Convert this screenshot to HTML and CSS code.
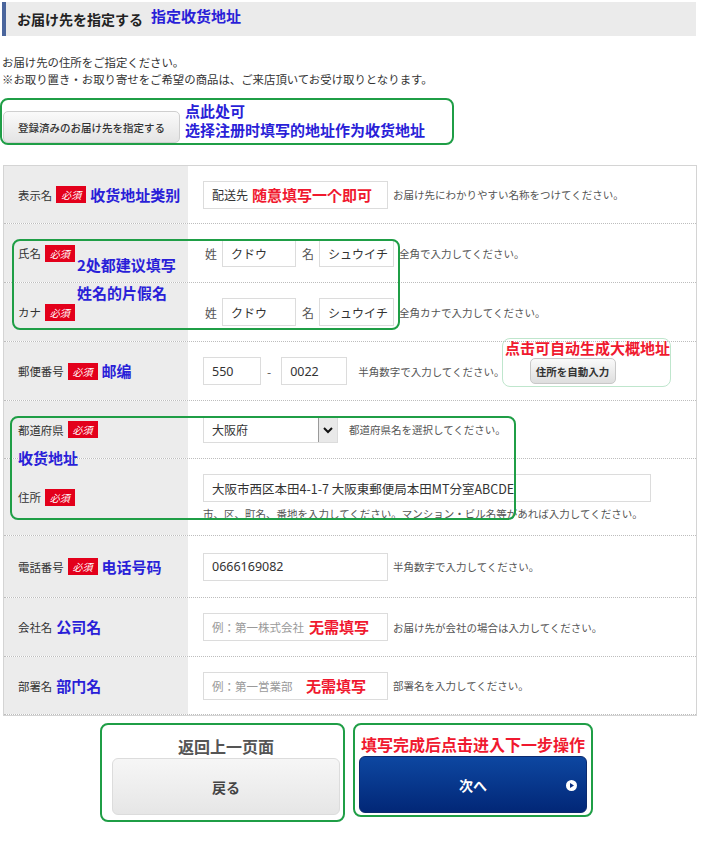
FILE: index.html
```html
<!DOCTYPE html>
<html lang="ja">
<head>
<meta charset="utf-8">
<title>お届け先を指定する</title>
<link rel="stylesheet" href="styles.css">
</head>
<body>
<div class="page">
  <div class="head">
    <h1 class="head-title">お届け先を指定する</h1>
    <span class="anno blue head-anno">指定收货地址</span>
  </div>

  <p class="intro">お届け先の住所をご指定ください。<br>※お取り置き・お取り寄せをご希望の商品は、ご来店頂いてお受け取りとなります。</p>

  <div class="reg">
    <button class="btn-reg">登録済みのお届け先を指定する</button>
    <div class="gbox reg-box"></div>
    <div class="anno blue reg-anno"><div>点此处可</div><div>选择注册时填写的地址作为收货地址</div></div>
  </div>

  <div class="form">
    <div class="row r1">
      <div class="lbl"><span class="lt">表示名</span><span class="req">必須</span><span class="anno blue">收货地址类别</span></div>
      <div class="val">
        <span class="fld"><span class="inp w185">配送先</span><span class="anno red in-anno a1">随意填写一个即可</span></span>
        <span class="note">お届け先にわかりやすい名称をつけてください。</span>
      </div>
    </div>
    <div class="row r2">
      <div class="lbl"><span class="lt">氏名</span><span class="req">必須</span></div>
      <div class="val">
        <span class="sub">姓</span><span class="inp w74">クドウ</span>
        <span class="sub">名</span><span class="inp w75">シュウイチ</span>
        <span class="note">全角で入力してください。</span>
      </div>
    </div>
    <div class="row r3">
      <div class="lbl"><span class="lt">カナ</span><span class="req">必須</span></div>
      <div class="val">
        <span class="sub">姓</span><span class="inp w74">クドウ</span>
        <span class="sub">名</span><span class="inp w75">シュウイチ</span>
        <span class="note">全角カナで入力してください。</span>
      </div>
    </div>
    <div class="row r4">
      <div class="lbl"><span class="lt">郵便番号</span><span class="req">必須</span><span class="anno blue">邮编</span></div>
      <div class="val">
        <span class="inp w58 num">550</span>
        <span class="dash">-</span>
        <span class="inp w66 num">0022</span>
        <span class="note zipnote">半角数字で入力してください。</span>
        <button class="btn-auto">住所を自動入力</button>
      </div>
    </div>
    <div class="row r5">
      <div class="lbl"><span class="lt">都道府県</span><span class="req">必須</span></div>
      <div class="val">
        <span class="sel"><span class="sel-txt">大阪府</span><span class="sel-arr"><svg width="12" height="10" viewBox="0 0 12 10"><path d="M2 3 L6 7 L10 3" fill="none" stroke="#111" stroke-width="2"/></svg></span></span>
        <span class="note">都道府県名を選択してください。</span>
      </div>
    </div>
    <div class="row r6">
      <div class="lbl"><span class="lt">住所</span><span class="req">必須</span></div>
      <div class="val col">
        <span class="inp w448">大阪市西区本田4-1-7 大阪東郵便局本田MT分室ABCDE</span>
        <span class="note addrnote">市、区、町名、番地を入力してください。マンション・ビル名等があれば入力してください。</span>
      </div>
    </div>
    <div class="row r7">
      <div class="lbl"><span class="lt">電話番号</span><span class="req">必須</span><span class="anno blue">电话号码</span></div>
      <div class="val">
        <span class="inp w185 num">0666169082</span>
        <span class="note">半角数字で入力してください。</span>
      </div>
    </div>
    <div class="row r8">
      <div class="lbl"><span class="lt">会社名</span><span class="anno blue">公司名</span></div>
      <div class="val">
        <span class="fld"><span class="inp w185 ph">例：第一株式会社</span><span class="anno red in-anno a8">无需填写</span></span>
        <span class="note">お届け先が会社の場合は入力してください。</span>
      </div>
    </div>
    <div class="row r9">
      <div class="lbl"><span class="lt">部署名</span><span class="anno blue">部门名</span></div>
      <div class="val">
        <span class="fld"><span class="inp w185 ph">例：第一営業部</span><span class="anno red in-anno a9">无需填写</span></span>
        <span class="note">部署名を入力してください。</span>
      </div>
    </div>

    <div class="gbox name-box"></div>
    <div class="gbox addr-box"></div>
    <div class="zip-box"></div>
    <div class="anno blue name-anno1">2处都建议填写</div>
    <div class="anno blue name-anno2">姓名的片假名</div>
    <div class="anno blue addr-anno">收货地址</div>
    <div class="anno red zip-anno">点击可自动生成大概地址</div>
  </div>

  <div class="actions">
    <div class="gbox2 back-box">
      <div class="back-anno">返回上一页面</div>
      <button class="btn-back">戻る</button>
    </div>
    <div class="gbox2 next-box">
      <div class="anno red next-anno">填写完成后点击进入下一步操作</div>
      <button class="btn-next">次へ<span class="next-ico"><svg width="11" height="11" viewBox="0 0 11 11"><circle cx="5.5" cy="5.5" r="5.5" fill="#fff"/><path d="M4 3 L8 5.5 L4 8 Z" fill="#0b2f80"/></svg></span></button>
    </div>
  </div>
</div>
</body>
</html>
```

FILE: styles.css
```css
* { box-sizing: border-box; }
body {
  margin: 0;
  background: #fff;
  font-family: "Noto Sans CJK JP", "Noto Sans", sans-serif;
  color: #333;
}
.page { width: 701px; position: relative; }

.anno {
  font-family: "Noto Sans CJK SC", "Noto Sans", sans-serif;
  font-weight: bold;
  font-size: 15px;
  line-height: 18px;
  white-space: nowrap;
}
.blue { color: #2a1fd8; }
.red { color: #f0192f; }

.head {
  margin: 2px 0 0 2px;
  width: 694px;
  height: 34px;
  background: #ebebeb;
  border-left: 4px solid #4a659c;
  display: flex;
  align-items: center;
  padding-left: 11px;
  gap: 8px;
}
.head-title {
  margin: 0;
  font-size: 14px;
  font-weight: bold;
  color: #222;
  line-height: 18px;
}
.head-anno { margin-top: -6px; }

.intro {
  margin: 18px 0 0 2px;
  font-size: 11.4px;
  line-height: 17px;
  color: #333;
}

.reg {
  position: relative;
  margin-top: 23px;
  height: 32px;
  padding-left: 3px;
}
.btn-reg {
  width: 177px;
  height: 32px;
  border: 1px solid #cfcfcf;
  border-radius: 5px;
  background: linear-gradient(#fafafa, #e4e4e4);
  font-family: "Noto Sans CJK JP", sans-serif;
  font-size: 10.5px;
  font-weight: 500;
  color: #333;
  padding: 0;
}
.gbox {
  position: absolute;
  border: 2px solid #1f9e46;
  border-radius: 8px;
  pointer-events: none;
}
.reg-box { left: 0; top: -13px; width: 454px; height: 47px; }
.reg-anno {
  position: absolute;
  left: 185px;
  top: -9px;
  display: flex;
  flex-direction: column;
  gap: 1px;
}

.form {
  position: relative;
  margin: 22px 0 0 3px;
  width: 694px;
  border: 1px solid #d4d4d4;
}
.row {
  display: flex;
  border-bottom: 1px dotted #bdbdbd;
}
.row:last-of-type { border-bottom: none; }
.r1 { height: 58px; }
.r2 { height: 59px; }
.r3 { height: 59px; }
.r4 { height: 59px; }
.r5 { height: 58px; }
.r6 { height: 77px; }
.r7 { height: 62px; }
.r8 { height: 59px; }
.r9 { height: 58px; }

.lbl {
  width: 184px;
  flex: none;
  background: #ececec;
  display: flex;
  align-items: center;
  padding-left: 14px;
  gap: 4px;
}
.lt { font-size: 11.4px; color: #333; }
.req {
  display: inline-block;
  width: 30px;
  height: 17px;
  background: #e3001b;
  color: #fff;
  font-size: 10px;
  font-style: italic;
  line-height: 17px;
  text-align: center;
}
.val {
  flex: 1;
  display: flex;
  align-items: center;
  padding-left: 15px;
  gap: 5px;
}
.val.col {
  flex-direction: column;
  align-items: flex-start;
  justify-content: flex-start;
  padding-top: 15px;
  gap: 4px;
}
.inp {
  display: inline-flex;
  align-items: center;
  height: 28px;
  border: 1px solid #dcdcdc;
  background: #fff;
  padding: 0 8px;
  font-size: 12px;
  color: #333;
  white-space: nowrap;
  flex: none;
}
.num { font-family: "Noto Sans", sans-serif; font-size: 12.5px; }
.ph { color: #9a9a9a; font-size: 11.5px; }
.w185 { width: 185px; }
.w74 { width: 74px; }
.w75 { width: 75px; }
.w58 { width: 58px; }
.w66 { width: 66px; }
.w448 { width: 448px; font-size: 12.5px; }
.sub { font-size: 12px; color: #555; margin: 0 0 0 2px; }
.r2 .sub:nth-of-type(3), .r3 .sub:nth-of-type(3) { margin-left: 1px; }
.note { font-size: 10.5px; color: #555; white-space: nowrap; }
.dash { margin: 0 5px 0 1px; color: #555; font-size: 12px; }
.zipnote { margin-left: 6px; }
.btn-auto {
  margin-left: 20px;
  width: 86px;
  height: 26px;
  border: 1px solid #c8c8c8;
  border-radius: 5px;
  background: linear-gradient(#fafafa, #dedede);
  font-family: "Noto Sans CJK JP", sans-serif;
  font-size: 10.5px;
  font-weight: bold;
  color: #333;
  padding: 0;
}
.fld { position: relative; display: inline-flex; }
.in-anno { position: absolute; top: 5px; }
.a1 { left: 49px; }
.a8 { left: 106px; }
.a9 { left: 103px; }

.sel {
  display: inline-flex;
  width: 135px;
  height: 27px;
  border: 1px solid #dcdcdc;
  background: #fff;
  flex: none;
}
.sel-txt { flex: 1; display: flex; align-items: center; padding-left: 8px; font-size: 12px; color: #333; }
.sel-arr {
  width: 19px;
  background: #e9e9e9;
  border-left: 1px solid #9a9a9a;
  border-top: 1px solid #bbb;
  display: flex;
  align-items: center;
  justify-content: center;
}
.r5 .note { margin-left: 6px; }

.name-box { left: 8px; top: 73px; width: 388px; height: 91px; }
.addr-box { left: 6px; top: 250px; width: 506px; height: 104px; }
.zip-box {
  position: absolute;
  left: 498px; top: 172px; width: 169px; height: 49px;
  border: 1.5px solid #bfe6cd;
  border-radius: 8px;
}
.name-anno1 { position: absolute; left: 73px; top: 90px; }
.name-anno2 { position: absolute; left: 73px; top: 118px; }
.addr-anno { position: absolute; left: 14px; top: 283px; }
.zip-anno { position: absolute; left: 501px; top: 173px; }

.actions {
  display: flex;
  gap: 8px;
  margin: 7px 0 0 100px;
  align-items: flex-start;
}
.gbox2 {
  border: 2px solid #1f9e46;
  border-radius: 8px;
  display: flex;
  flex-direction: column;
  align-items: center;
}
.back-box { width: 245px; height: 99px; padding: 12px 3px 0 10px; }
.next-box { width: 240px; height: 94px; padding: 9px 4px 0 4px; }
.back-anno {
  font-family: "Noto Sans CJK SC", sans-serif;
  font-weight: bold;
  font-size: 16px;
  line-height: 19px;
  color: #555;
  height: 21px;
}
.next-anno { font-size: 16px; line-height: 20px; height: 22px; }
.btn-back {
  width: 228px;
  height: 57px;
  border: 1px solid #dcdcdc;
  border-radius: 6px;
  background: linear-gradient(#f6f6f6, #e6e6e6);
  font-family: "Noto Sans CJK JP", sans-serif;
  font-size: 14px;
  font-weight: bold;
  color: #444;
  padding: 0;
}
.btn-next {
  position: relative;
  width: 228px;
  height: 57px;
  border: 1px solid #0b2a6e;
  border-radius: 6px;
  background: linear-gradient(#0d47a1, #022777);
  font-family: "Noto Sans CJK JP", sans-serif;
  font-size: 14px;
  font-weight: bold;
  color: #fff;
  padding: 0;
}
.next-ico { position: absolute; right: 9px; top: 23px; line-height: 0; }
```
